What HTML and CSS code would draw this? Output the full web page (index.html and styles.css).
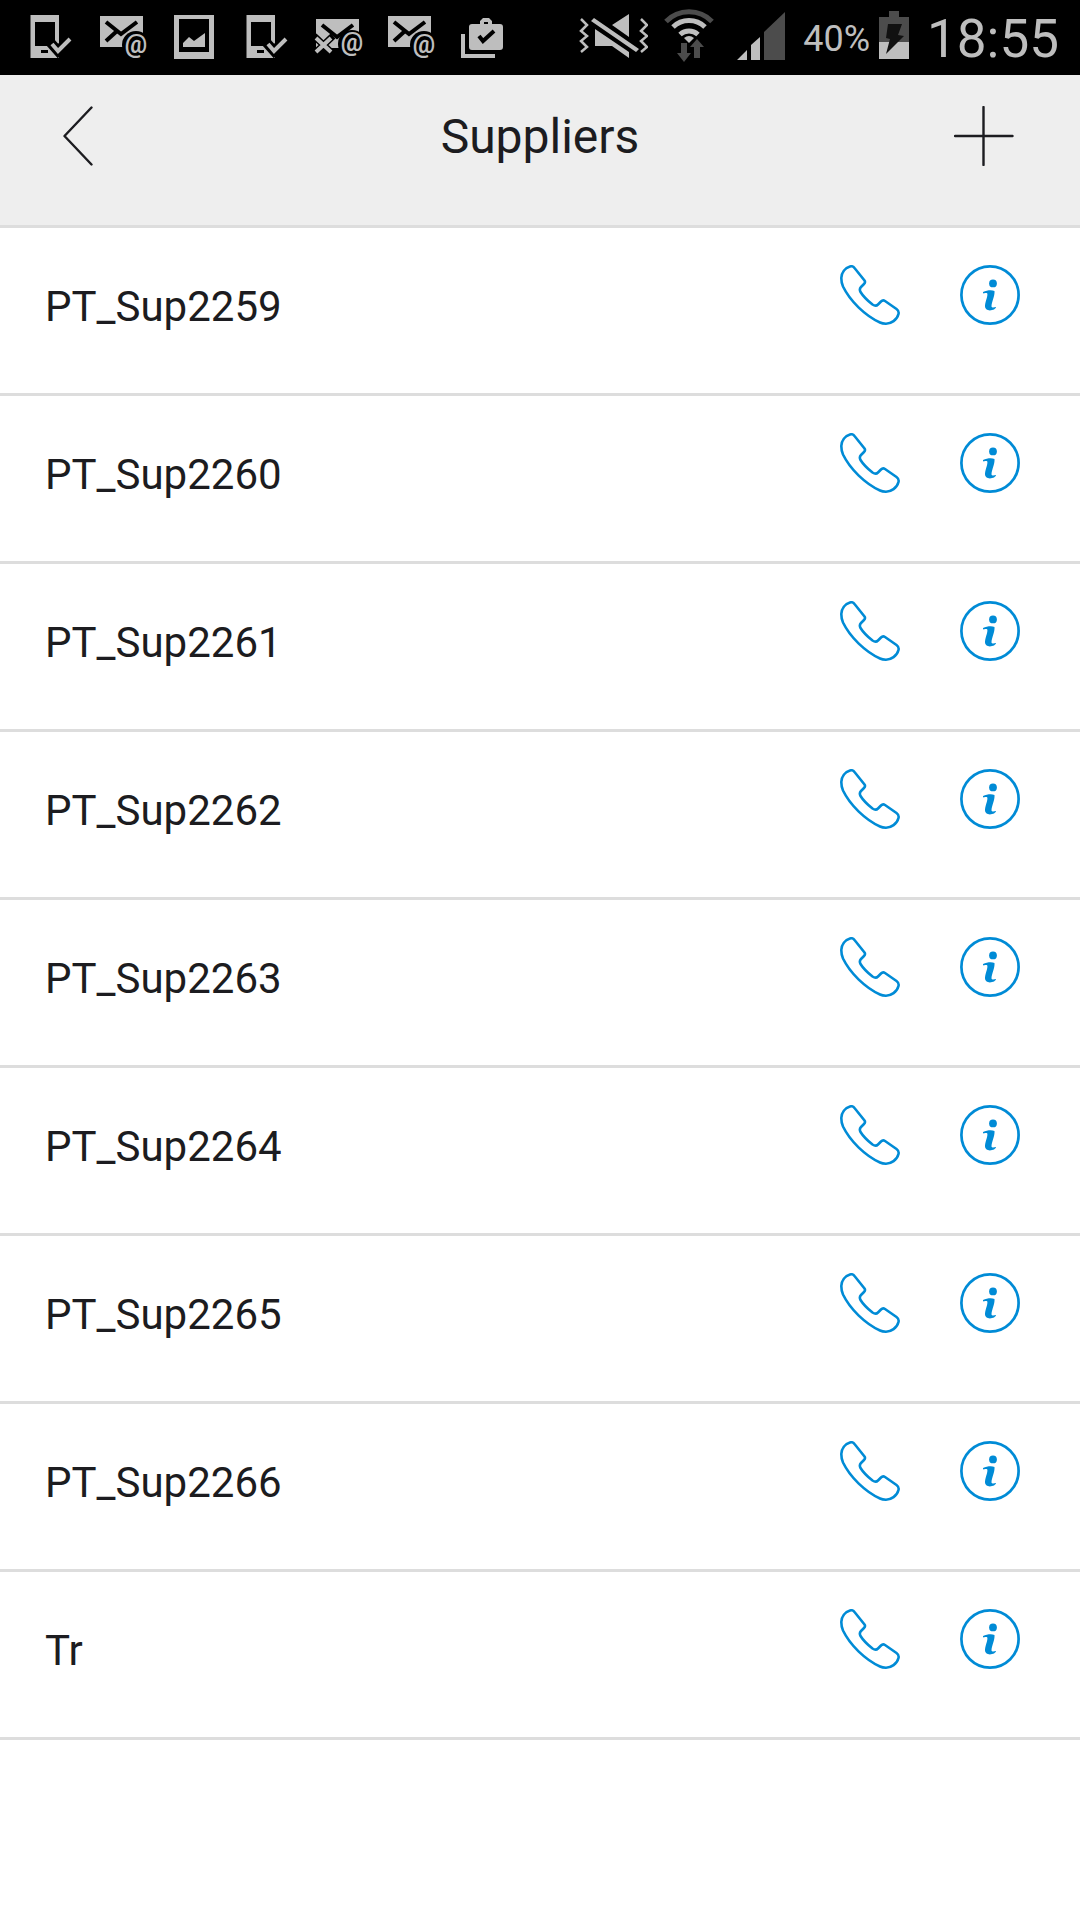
FILE: index.html
```html
<!DOCTYPE html>
<html lang="en">
<head>
<meta charset="utf-8">
<meta name="viewport" content="width=device-width, initial-scale=1">
<title>Suppliers</title>
<link rel="stylesheet" href="styles.css">
</head>
<body>
<svg class="sprite" aria-hidden="true">
  <symbol id="device" viewBox="0 0 72 75">
    <path class="lit" fill-rule="evenodd" d="M16.500 15H45V58H16.500ZM21 22V46H41V22ZM27 50V53H34V50Z"/>
    <path class="halo-wide" d="M36 42L44 51L56 39"/>
    <path class="stroke" d="M38 44L44 51L56 39"/>
  </symbol>
  <symbol id="phone" viewBox="0 0 60 60">
    <path d="M14.5 3L24.5 15.5C25.5 17 25 18 24 19L21 22C19.5 23.5 19.5 25 20.5 27C23 31 28 36 32.5 39.5C34.5 40.8 36.5 41 38 39.5L41 36.5C42.5 35 43.5 35 45 36L56.5 44C58.5 45.5 59 47 58.5 49C57 55 51 58.7 46 58.7C43.5 58.7 42 58.5 40 57.5C25 50.5 10 36 3 21.5C1.5 18 1.3 15.5 1.3 13C1.5 7.5 5 3 10 1.5C12 .9 13.5 1.5 14.5 3Z" fill="none" stroke="currentColor" stroke-width="2.6"/>
  </symbol>
  <symbol id="info" viewBox="0 0 60 60">
    <circle cx="30" cy="30" r="28.6" fill="none" stroke="currentColor" stroke-width="2.7"/>
    <circle cx="33" cy="18.4" r="3.9" fill="currentColor"/>
    <path d="M23 27C27 25 32 24.500 34.500 26C35 31 31.500 37 31.500 41.500C32 43 34 42.500 36 42C36 45.500 24.500 48 25 40.500C25.500 36 28 31 27.300 28.600C26.500 27.500 24 28.500 23 28.500Z" fill="currentColor"/>
  </symbol>
</svg>

<div class="status">
  <div class="notices" aria-hidden="true">
    <svg class="notice"><use href="#device"/></svg>
    <svg class="notice" viewBox="0 0 72 75">
      <path class="lit" d="M14 16H57V47H14Z"/>
      <path class="cut" d="M20 22L35 34L51 22M20 41L31 31"/>
      <circle cx="50" cy="45" r="14"/>
      <text class="at" x="50" y="53">@</text>
    </svg>
    <svg class="notice" viewBox="0 0 72 75">
      <path class="lit" fill-rule="evenodd" d="M16 15H56V59H16ZM21 19V52H51V19Z"/>
      <path class="lit" d="M25 43L31 37L36 41L47 33V47H25Z"/>
    </svg>
    <svg class="notice"><use href="#device"/></svg>
    <svg class="notice" viewBox="0 0 72 75">
      <path class="lit" d="M14 19H57V48H14Z"/>
      <path class="cut" d="M20 25L35 37L51 25"/>
      <path class="halo" d="M12 36L31 54M31 36L12 54"/>
      <circle cx="50" cy="44" r="14"/>
      <path class="stroke" d="M14 38L29 52M29 38L14 52"/>
      <text class="at" x="50" y="51">@</text>
    </svg>
    <svg class="notice" viewBox="0 0 72 75">
      <path class="lit" d="M14 16H57V47H14Z"/>
      <path class="cut" d="M20 22L35 34L51 22M20 41L31 31"/>
      <circle cx="50" cy="45" r="14"/>
      <text class="at" x="50" y="53">@</text>
    </svg>
    <svg class="notice" viewBox="0 0 72 75">
      <path class="lit" fill-rule="evenodd" d="M26 24H34V21L37 18H43L46 21V24H54Q57 24 57 27V47Q57 50 54 50H26Q23 50 23 47V27Q23 24 26 24ZM38 22V24H42V22Z"/>
      <path class="cut" d="M33 36L37 41L48 31"/>
      <path class="stroke" d="M17 34V56H49"/>
    </svg>
  </div>
  <div class="system">
    <svg class="mute" viewBox="0 0 72 75" aria-hidden="true">
      <path d="M5 19L11 25L5 31L11 36L5 41L11 47L5 52M65 19L71 25L65 31L71 36L65 41L71 47L65 52" fill="none" stroke="#bebebe" stroke-width="2.500"/>
      <path class="lit" d="M36 25L53 14V37ZM19 29V46H36L53 58V52ZM15 21L18 18L63 49L60 52Z"/>
    </svg>
    <svg class="wifi" viewBox="0 0 80 75" aria-hidden="true">
      <path class="dim-arc" d="M18 21.500A32 32 0 0 1 64 21.500"/>
      <path class="arc" d="M25 27A23 23 0 0 1 57 27M32 34.500A13.500 13.500 0 0 1 50 34.500"/>
      <path class="lit" d="M36 38Q41 34 46 38L41 43Z"/>
      <path class="dim" d="M33 43H39V53H43L36 62L29 53H33ZM46 58V47H42L49 39L56 47H52V58Z"/>
    </svg>
    <svg class="signal" viewBox="0 0 75 75" aria-hidden="true">
      <path class="lit" d="M9 60L19 50V60ZM23 60V45L32 37V60Z"/>
      <path class="dim" d="M36 60V32L57 12V60Z"/>
    </svg>
    <span class="percent">40%</span>
    <svg class="battery" viewBox="0 0 30 75" aria-hidden="true">
      <path class="dim" d="M0 17H10V11H20V17H30V42H0Z"/>
      <path class="lit" d="M0 42H30V59H0Z"/>
      <path fill="#111" d="M9 24H23L19 35L25 36L7 54L11 39L7 38Z"/>
    </svg>
    <time class="clock">18:55</time>
  </div>
</div>

<header class="header">
  <button class="nav" type="button" aria-label="Back">
    <svg class="icon" viewBox="0 0 60 60"><path d="M31.500 1.500L4.500 30L31.500 58.500"/></svg>
  </button>
  <h1 class="title">Suppliers</h1>
  <button class="nav" type="button" aria-label="Add supplier">
    <svg class="icon" viewBox="0 0 60 60"><path d="M29.500 1V59M1 30H58.500"/></svg>
  </button>
</header>

<main>
  <ul class="list">
    <li class="row"><span class="name">PT_Sup2259</span><button class="action" type="button" aria-label="Call PT_Sup2259"><svg class="icon"><use href="#phone"/></svg></button><button class="action" type="button" aria-label="Details of PT_Sup2259"><svg class="icon"><use href="#info"/></svg></button></li>
    <li class="row"><span class="name">PT_Sup2260</span><button class="action" type="button" aria-label="Call PT_Sup2260"><svg class="icon"><use href="#phone"/></svg></button><button class="action" type="button" aria-label="Details of PT_Sup2260"><svg class="icon"><use href="#info"/></svg></button></li>
    <li class="row"><span class="name">PT_Sup2261</span><button class="action" type="button" aria-label="Call PT_Sup2261"><svg class="icon"><use href="#phone"/></svg></button><button class="action" type="button" aria-label="Details of PT_Sup2261"><svg class="icon"><use href="#info"/></svg></button></li>
    <li class="row"><span class="name">PT_Sup2262</span><button class="action" type="button" aria-label="Call PT_Sup2262"><svg class="icon"><use href="#phone"/></svg></button><button class="action" type="button" aria-label="Details of PT_Sup2262"><svg class="icon"><use href="#info"/></svg></button></li>
    <li class="row"><span class="name">PT_Sup2263</span><button class="action" type="button" aria-label="Call PT_Sup2263"><svg class="icon"><use href="#phone"/></svg></button><button class="action" type="button" aria-label="Details of PT_Sup2263"><svg class="icon"><use href="#info"/></svg></button></li>
    <li class="row"><span class="name">PT_Sup2264</span><button class="action" type="button" aria-label="Call PT_Sup2264"><svg class="icon"><use href="#phone"/></svg></button><button class="action" type="button" aria-label="Details of PT_Sup2264"><svg class="icon"><use href="#info"/></svg></button></li>
    <li class="row"><span class="name">PT_Sup2265</span><button class="action" type="button" aria-label="Call PT_Sup2265"><svg class="icon"><use href="#phone"/></svg></button><button class="action" type="button" aria-label="Details of PT_Sup2265"><svg class="icon"><use href="#info"/></svg></button></li>
    <li class="row"><span class="name">PT_Sup2266</span><button class="action" type="button" aria-label="Call PT_Sup2266"><svg class="icon"><use href="#phone"/></svg></button><button class="action" type="button" aria-label="Details of PT_Sup2266"><svg class="icon"><use href="#info"/></svg></button></li>
    <li class="row"><span class="name">Tr</span><button class="action" type="button" aria-label="Call Tr"><svg class="icon"><use href="#phone"/></svg></button><button class="action" type="button" aria-label="Details of Tr"><svg class="icon"><use href="#info"/></svg></button></li>
  </ul>
</main>
</body>
</html>
```
FILE: styles.css
```css
* {
  box-sizing: border-box;
}

body {
  margin: 0;
  background: #fff;
  color: #1c1c20;
  font-family: Roboto, "Liberation Sans", sans-serif;
}

button {
  padding: 0;
  border: 0;
  background: none;
  color: inherit;
  cursor: pointer;
}

svg {
  display: block;
  flex: none;
}

.sprite {
  position: absolute;
  width: 0;
  height: 0;
}

/* Status bar */
.status {
  display: flex;
  justify-content: space-between;
  height: 75px;
  padding: 0 21px 0 14px;
  background: #000;
  color: #bebebe;
}

.notices,
.system {
  display: flex;
}

.notice,
.mute {
  width: 72px;
  height: 75px;
}

.wifi {
  width: 80px;
  height: 75px;
}

.signal {
  width: 75px;
  height: 75px;
}

.battery {
  width: 30px;
  height: 75px;
  margin: 0 18px 0 9px;
}

.percent,
.clock {
  padding-top: 3px;
  line-height: 72px;
}

.percent {
  font-size: 36px;
}

.clock {
  font-size: 53px;
}

.lit {
  fill: #bebebe;
}

.dim {
  fill: #4c4c4c;
}

.stroke,
.arc,
.dim-arc,
.cut,
.halo,
.halo-wide {
  fill: none;
  stroke: #bebebe;
  stroke-width: 4px;
}

.arc,
.dim-arc {
  stroke-width: 5px;
}

.dim-arc {
  stroke: #4c4c4c;
}

.cut {
  stroke: #000;
}

.halo {
  stroke: #000;
  stroke-width: 7px;
}

.halo-wide {
  stroke: #000;
  stroke-width: 10px;
}

.at {
  fill: #bebebe;
  font-size: 25px;
  font-weight: 700;
  text-anchor: middle;
}

/* Header */
.header {
  display: flex;
  align-items: flex-start;
  padding: 31px 60px 57px;
  border-bottom: 3px solid #ddd;
  background: #eee;
}

.nav {
  flex: none;
  width: 66px;
}

.nav path {
  fill: none;
  stroke: currentColor;
  stroke-width: 2.4px;
  stroke-linecap: round;
  stroke-linejoin: round;
}

.title {
  flex: 1;
  margin: 0;
  font-size: 48px;
  font-weight: 400;
  line-height: 62px;
  text-align: center;
}

/* Supplier list */
.list {
  margin: 0;
  padding: 0;
  list-style: none;
}

.row {
  display: flex;
  align-items: flex-start;
  gap: 60px;
  padding: 37px 60px 44px 45px;
  border-bottom: 3px solid #ddd;
}

.name {
  flex: 1;
  font-size: 42px;
  line-height: 84px;
}

.action {
  color: #008bd6;
}

.icon {
  width: 60px;
  height: 60px;
}
```
